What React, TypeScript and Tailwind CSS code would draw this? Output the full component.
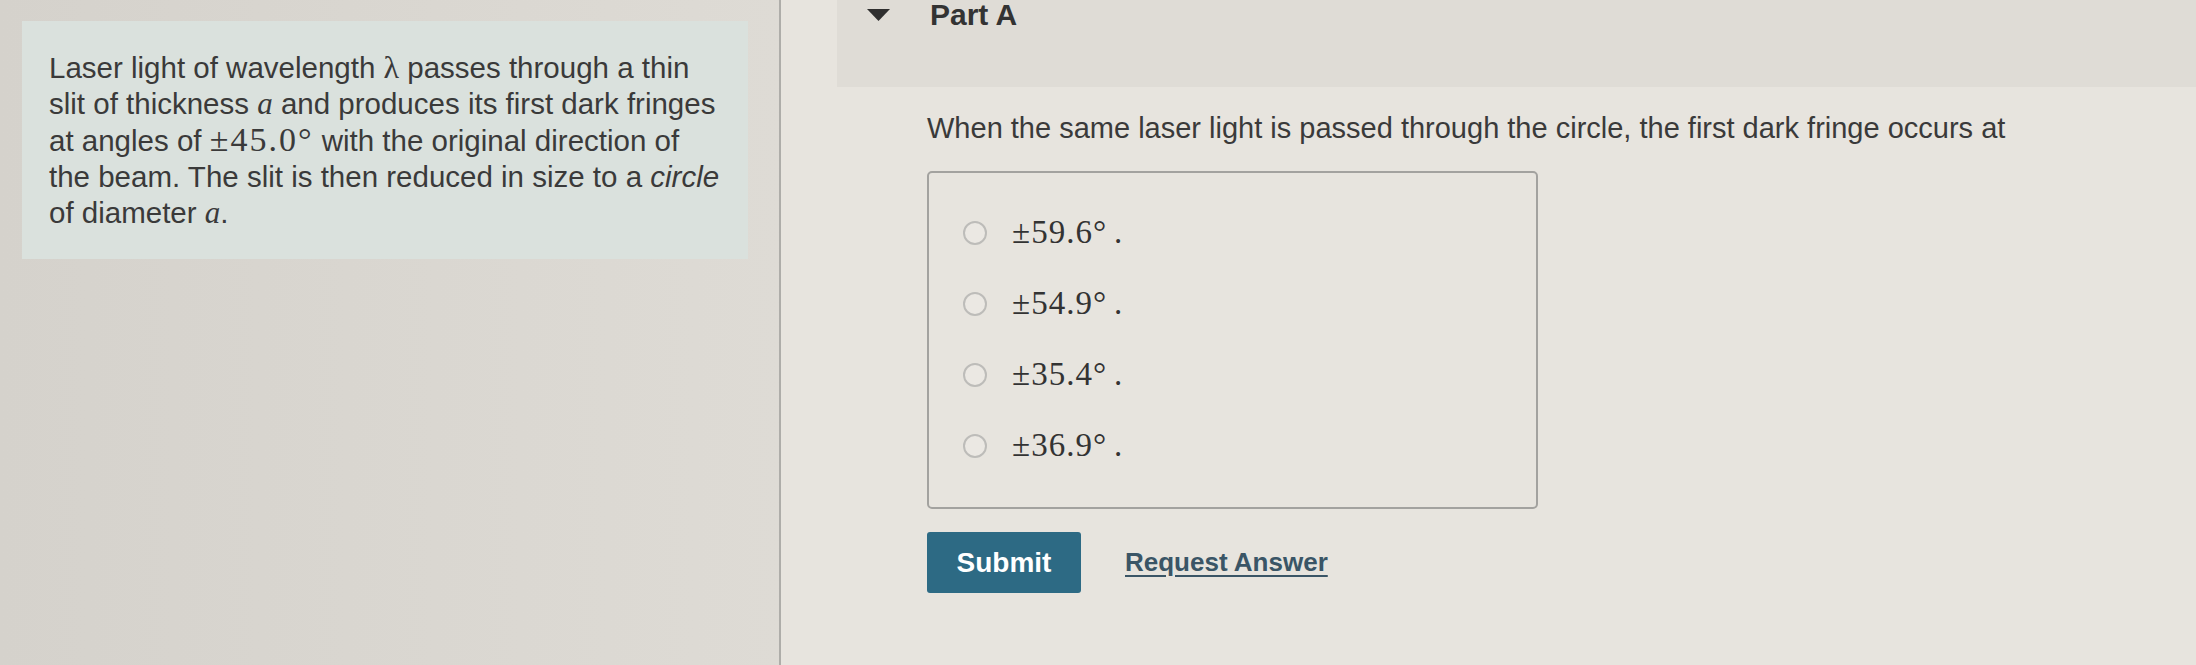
import React from "react";

const OPTIONS = ["59.6", "54.9", "35.4", "36.9"];

function MathA() {
  return <span className="font-['Liberation_Serif',serif] italic text-[31px]">a</span>;
}

export default function App() {
  return (
    <div className="w-[2196px] h-[665px] flex overflow-hidden font-['Liberation_Sans',Arial,sans-serif] text-[#3a3a3a]">
      {/* left: problem statement */}
      <div className="w-[781px] shrink-0 border-r-[2px] border-[#aeada9] bg-linear-to-r from-[#d5d2cc] to-[#dedbd5] pt-[21px] pl-[22px]">
        <div className="w-[726px] h-[238px] bg-[#dae1dd] pl-[27px] pr-[24px] pt-[28px] text-[29.5px] leading-[36px]">
          Laser light of wavelength{" "}
          <span className="font-['Liberation_Serif',serif] text-[32px]">λ</span> passes through a thin slit of
          thickness <MathA /> and produces its first dark fringes at angles of{" "}
          <span className="font-['Liberation_Serif',serif] text-[34px] tracking-[2px]">±45.0°</span>{" "}
          with the original direction of the beam. The slit is then reduced in size to a{" "}
          <span className="italic">circle</span> of diameter <MathA />.
        </div>
      </div>

      {/* right: part A */}
      <div className="flex-1 bg-[#e7e4de]">
        <div className="ml-[56px] h-[87px] bg-[#dfdcd6] flex items-start pl-[30px]">
          <div className="flex items-center h-[30px] gap-[40px]">
            <svg width="23" height="12" viewBox="0 0 23 12">
              <path d="M0 0 H23 L11.5 12 Z" fill="#2f2f2f" />
            </svg>
            <span className="text-[30px] font-bold leading-[30px] text-[#333]">Part A</span>
          </div>
        </div>

        <div className="pl-[146px]">
          <p className="mt-[23px] text-[29px] leading-[36px]">
            When the same laser light is passed through the circle, the first dark fringe occurs at
          </p>

          <div className="mt-[25px] w-[611px] h-[338px] border-[2px] border-[#a3a29f] rounded-[5px] pt-[24px] pl-[34px]">
            {OPTIONS.map((o) => (
              <label key={o} className="flex items-center h-[71px] gap-[25px]">
                <span className="w-[24px] h-[24px] rounded-full border-[2px] border-[#bdbcb9] bg-[#ebe8e3]" />
                <span className="font-['Liberation_Serif',serif] text-[33px] tracking-[1px] text-[#333]">
                  ±{o}°<span className="ml-[7px]">.</span>
                </span>
              </label>
            ))}
          </div>

          <div className="mt-[23px] flex items-center gap-[44px]">
            <button className="w-[154px] h-[61px] rounded-[3px] bg-[#2d6a84] text-white text-[28px] font-bold">
              Submit
            </button>
            <a className="text-[26px] font-bold text-[#3a5566] underline underline-offset-[4px]">
              Request Answer
            </a>
          </div>
        </div>
      </div>
    </div>
  );
}
